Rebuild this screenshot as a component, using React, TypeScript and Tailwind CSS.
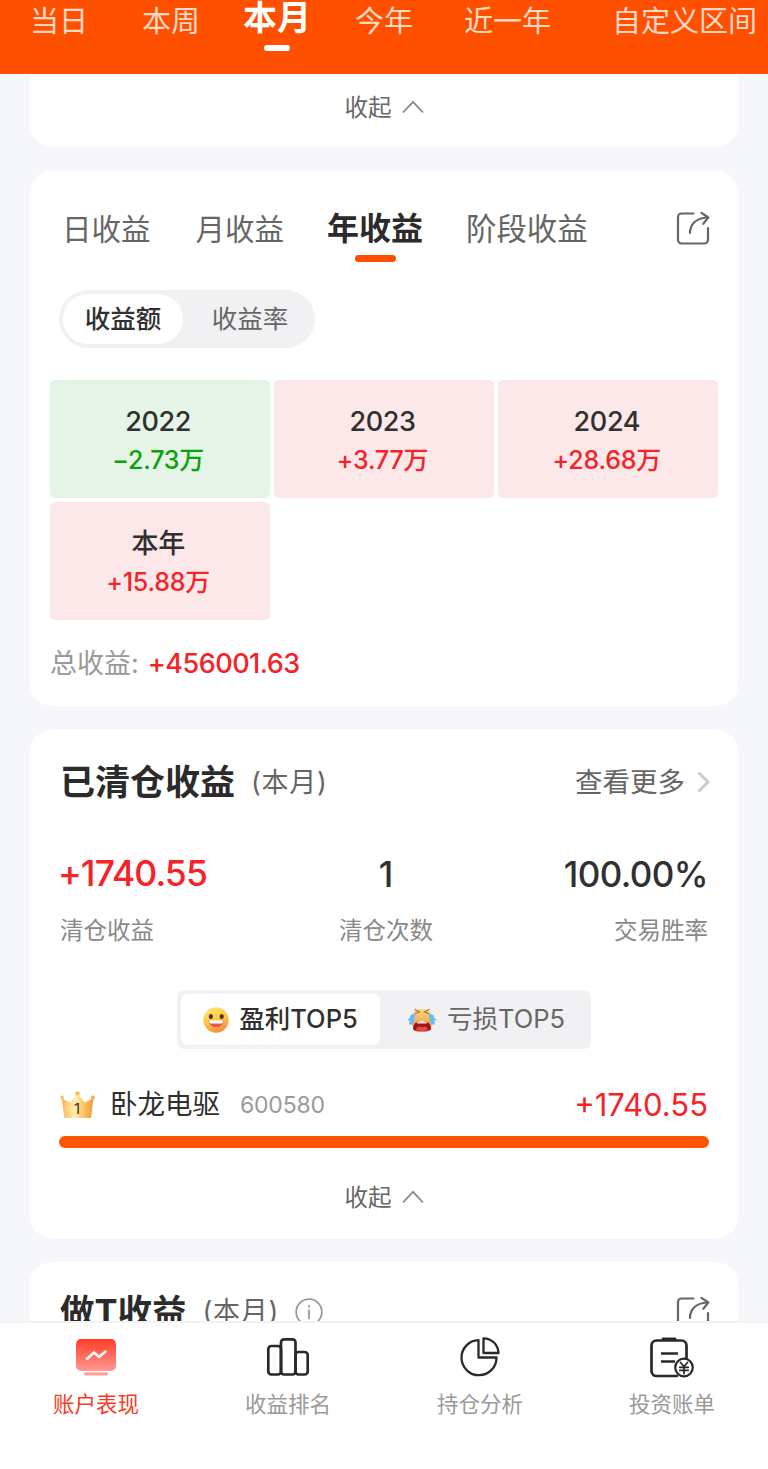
import React from "react";
import clsx from "clsx";

const periods = [
  { label: "当日", space: "ml-[30px]" },
  { label: "本周", space: "ml-[54px]" },
  { label: "本月", space: "ml-[43px]", active: true },
  { label: "今年", space: "ml-[44px]" },
  { label: "近一年", space: "ml-[51px]" },
  { label: "自定义区间", space: "ml-[61px]" },
];

const years = [
  { year: "2022", value: "−2.73万", loss: true },
  { year: "2023", value: "+3.77万" },
  { year: "2024", value: "+28.68万" },
  { year: "本年", value: "+15.88万" },
];

const Collapse: React.FC = () => (
  <button className="flex items-center gap-2.5 text-[23.5px] leading-8 text-[#666]">
    收起
    <svg className="-mt-0.5" width="22" height="14" viewBox="0 0 22 14" fill="none" stroke="#888" strokeWidth="1.8">
      <path d="M1 12.5 11 1.8 21 12.5" />
    </svg>
  </button>
);

const ShareIcon: React.FC = () => (
  <svg width="34" height="34" viewBox="0 0 34 34" fill="none" stroke="#666" strokeWidth="2.2" strokeLinecap="round" strokeLinejoin="round">
    <path d="M17.5 2.500H5.500A3.500 3.500 0 0 0 2 6V29a3.500 3.500 0 0 0 3.500 3.500H28.500A3.500 3.500 0 0 0 32 29V17" />
    <path d="M14 22C14 13 20.500 7 31 6.500" />
    <path d="m25.500 1.800 6.800 4.700-5 6.300" />
  </svg>
);

const HappyFace: React.FC = () => (
  <svg width="26" height="26" viewBox="0 0 26 26">
    <defs>
      <linearGradient id="happy" x1="0.2" y1="0" x2="0.6" y2="1">
        <stop offset="0" stopColor="#ffe873" />
        <stop offset="0.5" stopColor="#fdc944" />
        <stop offset="1" stopColor="#f58a45" />
      </linearGradient>
    </defs>
    <circle cx="13" cy="13" r="12.7" fill="url(#happy)" />
    <ellipse cx="7.900" cy="9.500" rx="2.100" ry="2.500" fill="#4d3022" />
    <ellipse cx="18.700" cy="9.500" rx="2.100" ry="2.500" fill="#4d3022" />
    <path d="M5.500 13.200h15.200c-.5 4.600-3.500 6.800-7.600 6.800s-7.100-2.200-7.600-6.800z" fill="#e0564a" />
    <path d="M6 13.200h14.200c0 2-1 3.400-2.300 3.400H8.300C7 16.600 6 15.200 6 13.200z" fill="#fff" />
  </svg>
);

const CryingFace: React.FC = () => (
  <svg width="30" height="26" viewBox="0 0 30 26">
    <defs>
      <linearGradient id="crying" x1="0" y1="0" x2="0" y2="1">
        <stop offset="0" stopColor="#fbd97f" />
        <stop offset="1" stopColor="#ef9443" />
      </linearGradient>
    </defs>
    <path d="M15 2C22 2 25.500 6 25.500 13s-3 11-10.500 11S4.500 20 4.500 13 8 2 15 2z" fill="url(#crying)" />
    <path d="M8 2.500 12.500 5 8.500 6.500M22 2.500 17.500 5l4 1.500" fill="none" stroke="#a3703a" strokeWidth="1.200" strokeLinecap="round" />
    <path d="M6 22.500c0-6 3-8.500 9-8.500s9 2.500 9 8.500c-2 1.800-5 2.100-9 2.100s-7-.3-9-2.100z" fill="#9d1818" />
    <path d="M9.500 15.300c3-1.600 8-1.600 11 0l-.8 1.200h-9.400z" fill="#f7ded5" />
    <path d="M9 23c1-4 4-4 6-2.500 2-1.500 5-1.500 6 2.500-3 1.400-9 1.400-12 0z" fill="#e44a3d" />
    <path d="M8.500 7.500C5 6.500 2.500 8 3 11L.5 12.500l2 1.500-.5 3.500c4 .5 5-2 5-4.500zM21.500 7.500C25 6.500 27.500 8 27 11l2.500 1.500-2 1.500.5 3.500c-4 .5-5-2-5-4.500z" fill="#68bbf2" />
  </svg>
);

const Crown: React.FC = () => (
  <svg width="36" height="28" viewBox="0 0 36 28">
    <defs>
      <linearGradient id="crown">
        <stop offset="0" stopColor="#f8b654" />
        <stop offset="0.42" stopColor="#fff0b5" />
        <stop offset="0.7" stopColor="#fbc45e" />
        <stop offset="1" stopColor="#f09a3c" />
      </linearGradient>
    </defs>
    <path d="M1.500 7 10 11.500 17.500 3l7.500 8.500L33.500 7 31 27H4.500z" fill="url(#crown)" />
    <circle cx="2" cy="6.500" r="2" fill="#fac36a" />
    <circle cx="17.500" cy="2.500" r="2.300" fill="#f8bd62" />
    <circle cx="33" cy="6.500" r="2" fill="#f6b052" />
    <text x="17" y="22.500" textAnchor="middle" fontFamily="Inter" fontSize="15" fill="#4a2b16">1</text>
  </svg>
);

const AccountIcon: React.FC = () => (
  <svg width="44" height="44" viewBox="0 0 44 44" fill="none">
    <defs>
      <linearGradient id="account" x1="0" y1="0" x2="0" y2="1">
        <stop stopColor="#ff3d26" />
        <stop offset="1" stopColor="#ff9a90" />
      </linearGradient>
    </defs>
    <rect x="2" y="3" width="40" height="32" rx="5" fill="url(#account)" />
    <rect x="10" y="36.500" width="24" height="3" rx="1.500" fill="#ff9c93" />
    <path d="m13 23 7-6.500 5 4.500 6.500-5.500" stroke="#fff" strokeWidth="2.500" strokeLinecap="round" strokeLinejoin="round" />
  </svg>
);

const RankIcon: React.FC = () => (
  <svg width="44" height="44" viewBox="0 0 44 44" fill="none" stroke="#292929" strokeWidth="2.700">
    <rect x="2.300" y="10" width="12.700" height="28.500" rx="3" />
    <rect x="15" y="3.400" width="14.500" height="35.100" rx="3" />
    <rect x="29.500" y="16" width="12.200" height="22.500" rx="3" />
  </svg>
);

const PieIcon: React.FC = () => (
  <svg width="44" height="44" viewBox="0 0 44 44" fill="none" stroke="#292929" strokeWidth="2.300" strokeLinejoin="round">
    <path d="M20.500 4.200A17.500 17.500 0 1 0 38.500 21.500H20.500z" />
    <path d="M25.500 2.300C34 2.500 40 8.500 40.500 17H25.500z" />
  </svg>
);

const BillIcon: React.FC = () => (
  <svg width="44" height="44" viewBox="0 0 44 44" fill="none" stroke="#292929" strokeWidth="2.700" strokeLinecap="round">
    <path d="M27 40H6.500a5 5 0 0 1-5-5V9.500a5 5 0 0 1 5-5h25a5 5 0 0 1 5 5V22" />
    <path d="M13 3h12" strokeWidth="3" />
    <path d="M11 17.500h17M11 25.500h14" strokeWidth="2.400" strokeLinecap="butt" />
    <circle cx="34" cy="31.500" r="8.800" fill="#fff" strokeWidth="2.200" />
    <path d="m30.500 26.500 3.500 4 3.500-4M34 31v6.500M29.700 31.300h8.600M29.700 34.300h8.600" strokeWidth="1.800" />
  </svg>
);

const navItems = [
  { label: "账户表现", icon: <AccountIcon />, active: true },
  { label: "收益排名", icon: <RankIcon /> },
  { label: "持仓分析", icon: <PieIcon /> },
  { label: "投资账单", icon: <BillIcon /> },
];

const App: React.FC = () => {
  return (
    <div className="flex h-[1469px] w-[768px] flex-col overflow-hidden bg-[#f6f7fa] font-['Inter','Noto_Sans_CJK_SC',sans-serif] whitespace-nowrap text-[#303030]">
      {/* Period tabs */}
      <header className="flex h-[74px] shrink-0 bg-[#ff5000]">
        {periods.map((p) => (
          <div key={p.label} className={clsx("flex shrink-0 flex-col items-center", p.space)}>
            {p.active ? (
              <>
                <span className="text-[34px] leading-[35px] font-bold text-white">{p.label}</span>
                <span className="mt-2.5 h-1.5 w-[26px] rounded-full bg-white" />
              </>
            ) : (
              <span className="text-[29px] leading-[44px] text-[#ffd9c8]">{p.label}</span>
            )}
          </div>
        ))}
      </header>

      <main className="flex flex-1 flex-col gap-6 overflow-hidden px-[30px]">
        <section className="flex h-[73px] shrink-0 justify-center rounded-b-[22px] bg-white pt-[18px]">
          <div><Collapse /></div>
        </section>

        {/* Yearly profit */}
        <section className="h-[535px] shrink-0 rounded-[22px] bg-white px-5 pt-[36px]">
          <div className="flex h-14 text-[29.5px] leading-[44px] text-[#666]">
            <span className="ml-3">日收益</span>
            <span className="ml-[45px]">月收益</span>
            <div className="ml-[43px] flex flex-col items-center">
              <span className="text-[32px] font-bold text-[#2b2b2b]">年收益</span>
              <span className="mt-[4px] h-[7px] w-[41px] shrink-0 rounded-full bg-[#ff5000]" />
            </div>
            <span className="ml-[43px] text-[30.400px]">阶段收益</span>
            <div className="mt-[4px] mr-[8px] ml-auto"><ShareIcon /></div>
          </div>

          <div className="mt-[27px] ml-[9px] flex h-[58px] w-[256px] rounded-full bg-[#f1f1f4] p-1 text-[25.500px] leading-[50px]">
            <div className="w-[120px] rounded-full bg-white text-center font-medium">收益额</div>
            <div className="flex-1 pl-1.5 text-center text-[#666]">收益率</div>
          </div>

          <div className="mt-[31.500px] -ml-[0.5px] grid w-[669px] grid-cols-3 gap-x-1 gap-y-[4.500px]">
            {years.map((y) => (
              <div
                key={y.year}
                className={clsx(
                  "flex h-[118px] flex-col items-center rounded-[5px] pt-[22px] pr-[3px] font-medium",
                  y.loss ? "bg-[#e5f4e6]" : "bg-[#fce8e9]"
                )}
              >
                <span className="text-[27px] leading-[39px] tracking-[-0.4px]">{y.year}</span>
                <span className={clsx("text-[25px] leading-[38px] tracking-[-0.2px]", y.loss ? "text-[#0aa20a]" : "text-[#f62227]")}>{y.value}</span>
              </div>
            ))}
          </div>

          <div className="mt-6 flex items-center leading-10">
            <span className="text-[27px] text-[#999]">总收益:</span>
            <span className="ml-[9px] text-[27px] font-medium tracking-[-0.5px] text-[#f62227]">+456001.63</span>
          </div>
        </section>

        {/* Closed positions */}
        <section className="h-[508px] shrink-0 rounded-[22px] bg-white px-[30px] pt-[28px]">
          <div className="flex h-12 items-center">
            <h2 className="text-[35px] font-bold text-[#2b2b2b]">已清仓收益</h2>
            <span className="mt-0.5 ml-4 text-[27px] tracking-[0.7px] text-[#666]">(本月)</span>
            <span className="mt-0.5 ml-auto text-[27.500px] text-[#666]">查看更多</span>
            <svg className="mr-[-2px] ml-3" width="13" height="22" viewBox="0 0 13 22" fill="none" stroke="#c9c9c9" strokeWidth="2.800">
              <path d="m1.500 1.500 9.500 9.500-9.500 9.500" />
            </svg>
          </div>

          <div className="mt-[44px] flex justify-between">
            <div className="w-[148px]">
              <div className="-ml-[2px] text-[35.500px] leading-[48px] font-medium tracking-[-0.9px] text-[#f62227]">+1740.55</div>
              <div className="mt-[15px] text-[23.500px] leading-9 text-[#888]">清仓收益</div>
            </div>
            <div className="pl-1 text-center">
              <div className="text-[35px] leading-[48px] font-medium">1</div>
              <div className="mt-[15px] text-[23.500px] leading-9 text-[#888]">清仓次数</div>
            </div>
            <div className="w-[148px] text-right">
              <div className="text-[35px] leading-[48px] font-medium tracking-[-0.6px]">100.00%</div>
              <div className="mt-[15px] text-[23.500px] leading-9 text-[#888]">交易胜率</div>
            </div>
          </div>

          <div className="mx-auto mt-[41px] flex h-[59px] w-[414px] rounded-[7px] bg-[#f1f1f4] p-1 text-[25.500px]">
            <div className="flex w-[199px] items-center justify-center gap-2.5 rounded-[7px] bg-white font-medium">
              <HappyFace />
              盈利TOP5
            </div>
            <div className="flex flex-1 items-center justify-center gap-2.5 pl-[5px] text-[#666]">
              <CryingFace />
              亏损TOP5
            </div>
          </div>

          <div className="mt-[34px] flex h-11 items-center">
            <Crown />
            <span className="ml-[14px] text-[27.500px]">卧龙电驱</span>
            <span className="ml-5 text-[23px] tracking-[-0.2px] text-[#999]">600580</span>
            <span className="ml-auto text-[31px] text-[#f62227]">+1740.55</span>
          </div>
          <div className="-mx-px mt-[9px] h-3 rounded-full bg-[#ff5500]" />
          <div className="mt-[34px] flex justify-center"><Collapse /></div>
        </section>

        <section className="flex h-[180px] shrink-0 items-start rounded-[22px] bg-white px-[30px] pt-[26px]">
          <h2 className="text-[34.500px] leading-[48px] font-bold text-[#2b2b2b]">做T收益</h2>
          <span className="ml-4 text-[27px] leading-[48px] tracking-[0.7px] text-[#666]">(本月)</span>
          <svg className="mt-[10px] ml-[16px]" width="28" height="28" viewBox="0 0 28 28" fill="none" stroke="#999" strokeWidth="1.800">
            <circle cx="14" cy="14" r="12.800" />
            <path d="M14 11.500V21M14 7v2.200" />
          </svg>
          <div className="mt-2 mr-[-2px] ml-auto"><ShareIcon /></div>
        </section>
      </main>

      {/* Bottom navigation */}
      <nav className="grid h-[148px] shrink-0 grid-cols-4 border-t-2 border-[#f2f2f3] bg-white pt-[13px]">
        {navItems.map((n) => (
          <div key={n.label} className="flex flex-col items-center">
            {n.icon}
            <span className={clsx("mt-2 text-[21.500px] leading-8", n.active ? "text-[#f93a24]" : "text-[#999]")}>{n.label}</span>
          </div>
        ))}
      </nav>
    </div>
  );
};

export default App;
